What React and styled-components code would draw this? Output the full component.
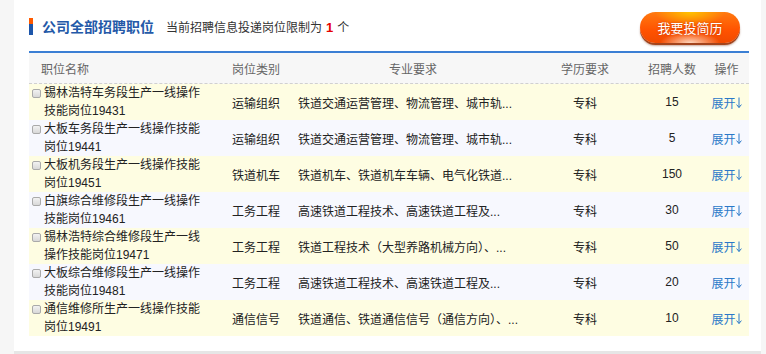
import React from 'react';
import styled, { createGlobalStyle } from 'styled-components';

const GlobalStyle = createGlobalStyle`
  html, body {
    margin: 0;
    padding: 0;
    background: #f6f6f6;
    font-family: "Liberation Sans", "Noto Sans CJK SC", sans-serif;
  }
`;

const Page = styled.div`
  width: 766px;
  height: 354px;
  padding: 0 5px 0 14px;
  box-sizing: border-box;
  overflow: hidden;
`;

const Panel = styled.div`
  background: #fff;
  height: 351px;
  padding: 0 12px 0 15px;
  box-sizing: border-box;
`;

const BottomBar = styled.div`
  height: 3px;
  background: #e6e6e6;
`;

const TitleRow = styled.div`
  height: 51px;
  display: flex;
  align-items: center;
  border-bottom: 2px solid #3b7fd4;
`;

const Accent = styled.div`
  width: 4px;
  height: 17px;
  background: linear-gradient(to bottom, #ff5a00 0, #ff5a00 6px, #1d56aa 6px);
  margin-right: 9px;
  margin-top: 2px;
`;

const Title = styled.div`
  font-size: 14px;
  font-weight: 600;
  color: #2459a8;
`;

const Notice = styled.div`
  font-size: 12px;
  color: #333;
  margin-left: 12px;
  margin-top: 1px;

  b {
    color: #e60000;
    font-size: 13px;
    margin: 0 4px;
  }
`;

const ApplyBtn = styled.button`
  margin-left: auto;
  margin-right: 9px;
  margin-top: 4px;
  width: 100px;
  height: 31px;
  border: none;
  border-radius: 16px;
  color: #fff;
  font-family: "Noto Sans CJK SC", sans-serif;
  font-size: 13px;
  text-shadow: 0 0 2px rgba(160, 40, 0, 0.6);
  background:
    radial-gradient(ellipse 30% 35% at 50% 100%, rgba(255, 230, 210, 0.9), rgba(255, 230, 210, 0) 100%),
    radial-gradient(ellipse 35% 45% at 50% 0%, #ffc200, rgba(255, 170, 0, 0) 100%),
    linear-gradient(to bottom, #ff7a10, #ff5200 60%, #f04a00);
  box-shadow: 0 2px 0 #a3441c, 0 3px 2px rgba(120, 50, 20, 0.4);
  cursor: pointer;
  padding: 0;
`;

const Grid = styled.div`
  display: grid;
  grid-template-columns: 197px 70px 234px 110px 64px 45px;
  background: ${p => p.$bg};
  height: ${p => p.$h}px;
  border-bottom: ${p => (p.$dashed ? '1px dashed #d0d0d0' : 'none')};
  font-size: 12px;
  color: ${p => p.$color || '#222'};
`;

const Cell = styled.div`
  display: flex;
  align-items: center;
  justify-content: ${p => (p.$center ? 'center' : 'flex-start')};
  padding-left: ${p => p.$pl || 0}px;
  white-space: nowrap;
  overflow: hidden;
`;

const NameCell = styled.div`
  display: flex;
  align-items: flex-start;
  padding-left: 3px;
  gap: 3px;
`;

const Check = styled.span`
  width: 7px;
  height: 7px;
  margin-top: 5px;
  border: 1px solid #aaa;
  border-radius: 2px;
  background: linear-gradient(#f2f2f2, #d8d8d8);
  flex-shrink: 0;
`;

const NameText = styled.div`
  width: 160px;
  line-height: 18px;
`;

const Toggle = styled.a`
  display: inline-flex;
  align-items: center;
  color: #2a78c8;
  font-family: "Noto Sans CJK SC", sans-serif;
  font-size: 12px;
  text-decoration: none;
  cursor: pointer;

  svg {
    margin-top: 1px;
  }
`;

const DownArrow = () => (
  <svg width="6" height="13" viewBox="0 0 6 13" fill="none" stroke="currentColor" strokeWidth="1">
    <path d="M3 1.5V11.5" />
    <path d="M0.6 8.6L3 11.5L5.4 8.6" />
  </svg>
);

const rows = [
  ['锡林浩特车务段生产一线操作技能岗位19431', '运输组织', '铁道交通运营管理、物流管理、城市轨...', '15'],
  ['大板车务段生产一线操作技能岗位19441', '运输组织', '铁道交通运营管理、物流管理、城市轨...', '5'],
  ['大板机务段生产一线操作技能岗位19451', '铁道机车', '铁道机车、铁道机车车辆、电气化铁道...', '150'],
  ['白旗综合维修段生产一线操作技能岗位19461', '工务工程', '高速铁道工程技术、高速铁道工程及...', '30'],
  ['锡林浩特综合维修段生产一线操作技能岗位19471', '工务工程', '铁道工程技术（大型养路机械方向）、...', '50'],
  ['大板综合维修段生产一线操作技能岗位19481', '工务工程', '高速铁道工程技术、高速铁道工程及...', '20'],
  ['通信维修所生产一线操作技能岗位19491', '通信信号', '铁道通信、铁道通信信号（通信方向）、...', '10'],
];

export default function App() {
  return (
    <>
      <GlobalStyle />
      <Page>
        <Panel>
          <TitleRow>
            <Accent />
            <Title>公司全部招聘职位</Title>
            <Notice>
              当前招聘信息投递岗位限制为<b>1</b>个
            </Notice>
            <ApplyBtn>我要投简历</ApplyBtn>
          </TitleRow>
          <Grid $bg="#f7f7f7" $h={30} $dashed $color="#666">
            <Cell $pl={12}>职位名称</Cell>
            <Cell $pl={6}>岗位类别</Cell>
            <Cell $center>专业要求</Cell>
            <Cell $center>学历要求</Cell>
            <Cell $center>招聘人数</Cell>
            <Cell $center>操作</Cell>
          </Grid>
          {rows.map((r, i) => (
            <Grid key={r[0]} $bg={i % 2 === 0 ? '#fefde2' : '#f7f8fe'} $h={36}>
              <NameCell>
                <Check />
                <NameText>{r[0]}</NameText>
              </NameCell>
              <Cell $pl={6}>{r[1]}</Cell>
              <Cell $pl={2}>{r[2]}</Cell>
              <Cell $center>专科</Cell>
              <Cell $center>{r[3]}</Cell>
              <Cell $center>
                <Toggle>
                  展开<DownArrow />
                </Toggle>
              </Cell>
            </Grid>
          ))}
        </Panel>
        <BottomBar />
      </Page>
    </>
  );
}
